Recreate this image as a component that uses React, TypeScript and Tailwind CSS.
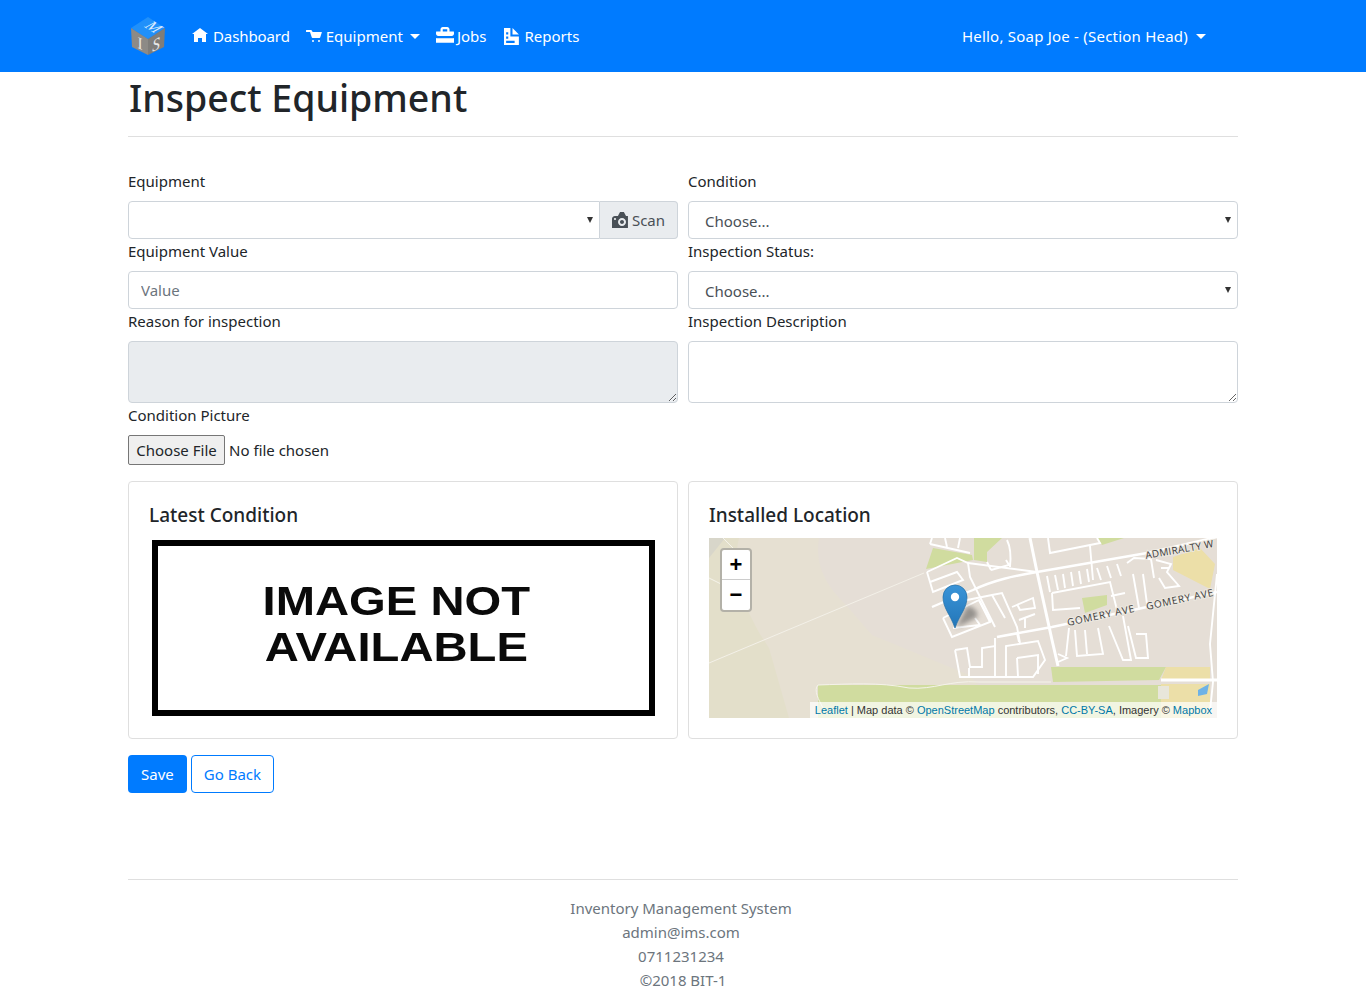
function Icon({ d, className = "h-4 w-4" }: { d: string; className?: string }) {
  return (
    <svg viewBox="0 0 8 8" fill="currentColor" className={`shrink-0 ${className}`}>
      <path d={d} />
    </svg>
  );
}

const icons = {
  home: "M4 0l-4 3h1v4h2v-2h2v2h2v-4.03l1 .03-4-3z",
  cart: "M.34 0a.5.5 0 0 0 .16 1h1.5l.09.25.41 1.25.41 1.25c.04.13.21.25.34.25h3.5c.14 0 .3-.12.34-.25l.81-2.5c.04-.13-.02-.25-.16-.25h-4.44l-.38-.72a.5.5 0 0 0-.44-.28h-2a.5.5 0 0 0-.09 0 .5.5 0 0 0-.06 0zm3.16 5a.5.5 0 1 0 0 1 .5.5 0 1 0 0-1zm3 0a.5.5 0 1 0 0 1 .5.5 0 1 0 0-1z",
  briefcase: "M3 0c-.55 0-1 .45-1 1v1h-1.91l-.09.5v.5c0 .55.45 1 1 1h6c.55 0 1-.45 1-1v-.5l-.09-.5h-1.91v-1c0-.55-.45-1-1-1h-2zm0 1h2v1h-2v-1zm-3 3.91v2.09h8v-2.09c-.16.05-.32.09-.5.09h-7c-.18 0-.34-.04-.5-.09z",
  document: "M0 0v8h7v-4h-4v-4h-3zm4 0v3h3l-3-3zm-3 2h1v1h-1v-1zm0 2h1v1h-1v-1zm0 2h4v1h-4v-1z",
  camera: "M4.09 0c-.05 0-.1.04-.13.09l-.94 1.81c-.02.05-.07.09-.13.09h-1.41c-.83 0-1.5.67-1.5 1.5v4.41c0 .05.04.09.09.09h7.81c.05 0 .09-.04.09-.09v-5.81c0-.06-.04-.09-.09-.09h-.81c-.05 0-.1-.04-.13-.09l-.94-1.81c-.03-.05-.07-.09-.13-.09h-1.81zm-2.59 3c.28 0 .5.22.5.5s-.22.5-.5.5-.5-.22-.5-.5.22-.5.5-.5zm3.5 0c1.1 0 2 .9 2 2s-.9 2-2 2-2-.9-2-2 .9-2 2-2zm0 1c-.55 0-1 .45-1 1s.45 1 1 1 1-.45 1-1-.45-1-1-1z",
};

function Caret({ className }: { className: string }) {
  return <span className={`inline-block border-x-[5px] border-t-[5px] border-x-transparent ${className}`} />;
}

function Logo() {
  return (
    <svg width="38" height="40" viewBox="0 0 38 40" className="shrink-0">
      <polygon points="18,1 35,12 18,23 1,12" fill="#2090fa" />
      <polygon points="1,12 18,23 18,39 2,31" fill="#8d8a86" />
      <polygon points="18,23 35,12 34,31 18,39" fill="#7f7d7a" />
      <text transform="matrix(0.72 0.45 -0.9 0.5 19 14)" textAnchor="middle" fontSize="17" fill="#dcecff" fontFamily="Liberation Serif, serif">M</text>
      <text transform="matrix(0.9 0.45 0 1 10 33)" textAnchor="middle" fontSize="17" fill="#e8e8e8" fontFamily="Liberation Serif, serif">I</text>
      <text transform="matrix(0.9 -0.45 0 1 26 34)" textAnchor="middle" fontSize="17" fill="#e8e8e8" fontFamily="Liberation Serif, serif" fontStyle="italic">S</text>
    </svg>
  );
}

function Navbar() {
  return (
    <nav className="h-[72px] bg-[#007bff] text-white">
      <div className="mx-auto flex h-full w-[1110px] items-center">
        <div className="ml-[2px] mr-[24px]">
          <Logo />
        </div>
        <a className="flex items-center gap-[5px] tracking-[-0.1px]"><Icon d={icons.home} />Dashboard</a>
        <a className="ml-[16px] flex items-center gap-[4px]"><Icon d={icons.cart} className="h-4 w-4 translate-y-[2px]" />Equipment<Caret className="ml-[3px] border-t-white" /></a>
        <a className="ml-[16px] flex items-center gap-[3px]"><Icon d={icons.briefcase} className="h-[18px] w-[18px]" />Jobs</a>
        <a className="ml-[18px] flex items-center gap-[3px]"><Icon d={icons.document} className="h-[17px] w-[17px]" />Reports</a>
        <a className="ml-auto mr-[32px] flex items-center gap-[8px] tracking-[0.22px]">Hello, Soap Joe - (Section Head)<Caret className="border-t-white" /></a>
      </div>
    </nav>
  );
}

function Field({ label, children }: { label: string; children: React.ReactNode }) {
  return (
    <div>
      <label className="mb-2 block h-6 leading-6">{label}</label>
      {children}
    </div>
  );
}

function SelectBox() {
  return (
    <div className="relative">
      <select className="h-[38px] w-full appearance-none rounded-[4px] border border-[#ced4da] bg-white pl-4 pt-[1px] text-[#495057]">
        <option>Choose...</option>
      </select>
      <span className="absolute right-[7px] top-[16px] border-x-[3px] border-t-[6px] border-x-transparent border-t-[#333]" />
    </div>
  );
}

function MapPreview() {
  const roads = [
    // upper left loops
    "M218 34 L248 20 L259 25 L328 34",
    "M218 34 L224 54 L254 42 L248 34 L221 44",
    "M259 25 L261 39 L286 89",
    "M221 6 L261 15 M236 0 L238 9 M251 0 L249 10 M223 0 L221 6",
    "M298 2 C302 10 302 20 301 29 M282 32 L300 27 L297 22 M282 32 L278 24",
    // block under the pin
    "M234 80 L243 99 L281 84 L270 62 L234 80 M266 80 L271 87 L244 90",
    "M248 64 L283 57 L293 55 L308 89 L311 105",
    "M270 62 L282 84 M283 57 L296 80",
    "M303 69 L324 60 L326 70 L311 72 L308 66 M310 82 L326 76 M316 80 L316 90",
    // bottom blocks
    "M246 112 L258 110 L261 129 L273 129 L273 110 L286 108 L286 139 M246 112 L251 139 L324 139 L336 122 L329 103 L297 108 L297 139",
    "M308 120 L329 117 L329 136 M308 120 L309 139 M286 100 L286 108 M308 95 L310 104 M260 139 L260 130",
    // middle right
    "M339 0 L341 15 L391 5 L388 0 M381 8 L384 42",
    "M343 55 L401 44 L408 72 M343 55 L344 72 L371 70 M402 58 L416 55",
    "M338 38 L341 54 M346 37 L349 52 M354 36 L356 50 M362 34 L364 48 M370 33 L372 46 M378 31 L380 44 M388 30 L392 42 M398 28 L402 40 M408 26 L412 38",
    "M418 25 L425 20 L442 21 L445 40 M424 36 L430 70 M434 36 L438 66 M447 22 L462 26 L458 34 L470 48 L456 50 L450 40 M452 30 L460 30",
    "M349 116 L358 120 L349 124 M357 118 L360 90 M366 92 L368 118 L394 116 L389 90 M376 92 L378 116",
    "M400 88 L414 122 L422 122 L414 78 M427 96 L437 96 L439 120 L427 120 L419 88",
    "M508 36 L501 106 L504 144 L501 173",
  ];
  return (
    <div className="relative h-[180px] w-[508px] overflow-hidden bg-[#e5ded6]">
      <svg width="508" height="180" viewBox="0 0 508 180" className="block">
        <defs>
          <filter id="pin-shadow" x="-30%" y="-30%" width="160%" height="160%">
            <feGaussianBlur stdDeviation="2.5" />
          </filter>
          <linearGradient id="pin-fill" x1="0" y1="0" x2="0" y2="1">
            <stop offset="0" stopColor="#3a94d8" />
            <stop offset="1" stopColor="#2376b8" />
          </linearGradient>
        </defs>
        <rect width="508" height="180" fill="#e5ded6" />
        <path d="M0 0 H110 C105 30 120 50 136 66 L163 97 L260 137 L300 180 H0 Z" fill="#e6e0d2" />
        <path d="M0 0 H30 C20 40 40 80 60 110 L80 180 H0 Z" fill="#e3dfca" />
        <path d="M0 0 H16 L0 20 Z" fill="#d8d6ca" />
        <path d="M109 147 H452 V180 H109 Z" fill="#d0dc9f" />
        <path d="M342 129 H457 L450 142 L344 144 Z" fill="#d0dc9f" />
        <path d="M224 10 L263 17 L264 22 L217 31 Z M265 0 H293 L278 14 V24 L265 22 Z M389 0 H415 L393 7 Z" fill="#d0dc9f" />
        <path d="M373 60 L398 57 L398 67 L376 75 Z" fill="#d0dc9f" />
        <path d="M464 19 L491 10 L506 26 L501 51 L464 32 Z M457 129 H501 V142 H452 Z M452 146 H501 V180 H452 Z" fill="#ecdfa8" />
        <path d="M0 125 L215 35" stroke="#f3f0e8" strokeWidth="1" fill="none" />
        <path d="M14 0 L26 12 M0 40 L12 46" stroke="#f5f3ea" strokeWidth="1" fill="none" />
        <path d="M109 147 C104 152 110 162 114 170 M109 147 C140 146 170 144 200 150 C225 152 240 142 270 144 H342" stroke="#f5f3ea" strokeWidth="1" fill="none" />
        {roads.map((d) => (
          <path key={d} d={d} stroke="#ffffff" strokeWidth="1.9" fill="none" />
        ))}
        <path d="M223 69 L244 60 L264 52 C285 42 305 38 328 34 L438 15 L508 -1" stroke="#fff" strokeWidth="2.4" fill="none" />
        <path d="M321 0 L328 34 L343 102 L349 128" stroke="#fff" strokeWidth="3" fill="none" />
        <path d="M288 99 L343 89 L424 72 L508 54" stroke="#fff" strokeWidth="2.6" fill="none" />
        <path d="M452 142 H508" stroke="#fff" strokeWidth="3" />
        <rect x="449" y="148" width="11" height="13" fill="#e8e6da" />
        <path d="M489 152 L500 146 L498 156 L489 158 Z" fill="#6db2e6" />
        <g fontFamily="Open Sans, sans-serif" fontSize="10" fill="#3a3a3a" stroke="#ece8e0" strokeWidth="2" paintOrder="stroke">
          <text transform="translate(437 21) rotate(-10)" letterSpacing="0.3">ADMIRALTY W</text>
          <text transform="translate(359 88) rotate(-12)" letterSpacing="0.7">GOMERY AVE</text>
          <text transform="translate(438 72) rotate(-12)" letterSpacing="0.7">GOMERY AVE</text>
        </g>
        <path d="M247 90 L268 79 C270 74 264 68 258 68 Z" fill="#444" opacity="0.5" filter="url(#pin-shadow)" />
        <path d="M246 90 C241 76 234 70 234 59 A12 12 0 0 1 258 59 C258 70 251 76 246 90 Z" fill="url(#pin-fill)" stroke="#2470a8" strokeWidth="0.7" />
        <circle cx="246" cy="59" r="4.2" fill="#fff" />
      </svg>
      <div className="absolute left-[11px] top-[10px] w-[32px] overflow-hidden rounded-[4px] border-2 border-[#b3b1a8] bg-white text-center font-['Liberation_Sans',sans-serif] text-[22px] font-bold leading-[30px] text-black">
        <div className="h-[30px] border-b border-[#ccc]">+</div>
        <div className="h-[30px]">−</div>
      </div>
      <div className="absolute bottom-0 right-0 bg-white/70 px-[5px] font-['Liberation_Sans',sans-serif] text-[11px] leading-[16px] text-[#333]">
        <a className="text-[#0078a8]">Leaflet</a> | Map data © <a className="text-[#0078a8]">OpenStreetMap</a> contributors, <a className="text-[#0078a8]">CC-BY-SA</a>, Imagery © <a className="text-[#0078a8]">Mapbox</a>
      </div>
    </div>
  );
}

function Card({ title, children }: { title: string; children: React.ReactNode }) {
  return (
    <div className="h-[258px] rounded-[4px] border border-[#dfdfdf] p-5">
      <h5 className="mb-[11px] pt-[1px] text-[19px] font-medium leading-6 text-[#212529]">{title}</h5>
      {children}
    </div>
  );
}

export default function App() {
  return (
    <div className="font-['Noto_Sans',sans-serif] text-[15px] leading-6 text-[#212529]">
      <Navbar />
      <main className="mx-auto w-[1110px]">
        <h1 className="pl-[1px] pt-[2px] text-[37.5px] font-medium leading-[48px]">Inspect Equipment</h1>
        <hr className="mb-[32px] mt-[14px] border-[#dfdfdf]" />
        <div className="grid grid-cols-2 gap-x-[10px]">
          <Field label="Equipment">
            <div className="flex h-[38px]">
              <div className="relative flex-1 rounded-l-[4px] border border-[#ced4da]">
                <span className="absolute right-[6px] top-[15px] border-x-[3px] border-t-[6px] border-x-transparent border-t-[#333]" />
              </div>
              <div className="flex w-[78px] items-center justify-center gap-[4px] rounded-r-[4px] border border-l-0 border-[#ced4da] bg-[#e9ecef] text-[#495057]">
                <Icon d={icons.camera} />Scan
              </div>
            </div>
          </Field>
          <Field label="Condition"><SelectBox /></Field>
          <Field label="Equipment Value">
            <input placeholder="Value" className="block h-[38px] w-full rounded-[4px] border border-[#ced4da] px-3 placeholder:text-[#6c757d]" />
          </Field>
          <Field label="Inspection Status:"><SelectBox /></Field>
          <Field label="Reason for inspection">
            <textarea disabled className="block h-[62px] w-full rounded-[4px] border border-[#ced4da] bg-[#e9ecef]" />
          </Field>
          <Field label="Inspection Description">
            <textarea className="block h-[62px] w-full rounded-[4px] border border-[#ced4da]" />
          </Field>
          <div className="col-span-2">
            <label className="mb-2 block h-6 leading-6">Condition Picture</label>
            <div className="flex h-[30px] items-center gap-[4px]">
              <button className="h-[30px] w-[97px] rounded-[2px] border border-[#767676] bg-[#efefef]">Choose File</button>
              <span>No file chosen</span>
            </div>
          </div>
        </div>
        <div className="mt-4 grid grid-cols-2 gap-x-[10px]">
          <Card title="Latest Condition">
            <div className="flex h-[180px] w-[508px] justify-center pt-[2px]">
              <div className="flex h-[176px] w-[503px] items-center justify-center border-[6px] border-black bg-white pb-[8px] pr-[14px] text-center font-['Liberation_Sans',sans-serif] text-[40px] font-bold leading-[46px] text-[#0a0a0a]">
                <span className="scale-x-[1.18]">IMAGE NOT<br />AVAILABLE</span>
              </div>
            </div>
          </Card>
          <Card title="Installed Location"><MapPreview /></Card>
        </div>
        <div className="mt-4 flex gap-[4px]">
          <button className="h-[38px] rounded-[4px] bg-[#007bff] px-[13px] text-white">Save</button>
          <button className="h-[38px] rounded-[4px] border border-[#007bff] px-3 text-[#007bff]">Go Back</button>
        </div>
        <hr className="mt-[86px] border-[#dfdfdf]" />
        <footer className="pr-[4px] pt-[16px] text-center text-[#6c757d]">
          <div>Inventory Management System</div>
          <div>admin@ims.com</div>
          <div>0711231234</div>
          <div className="pl-1">©2018 BIT-1</div>
        </footer>
      </main>
    </div>
  );
}
